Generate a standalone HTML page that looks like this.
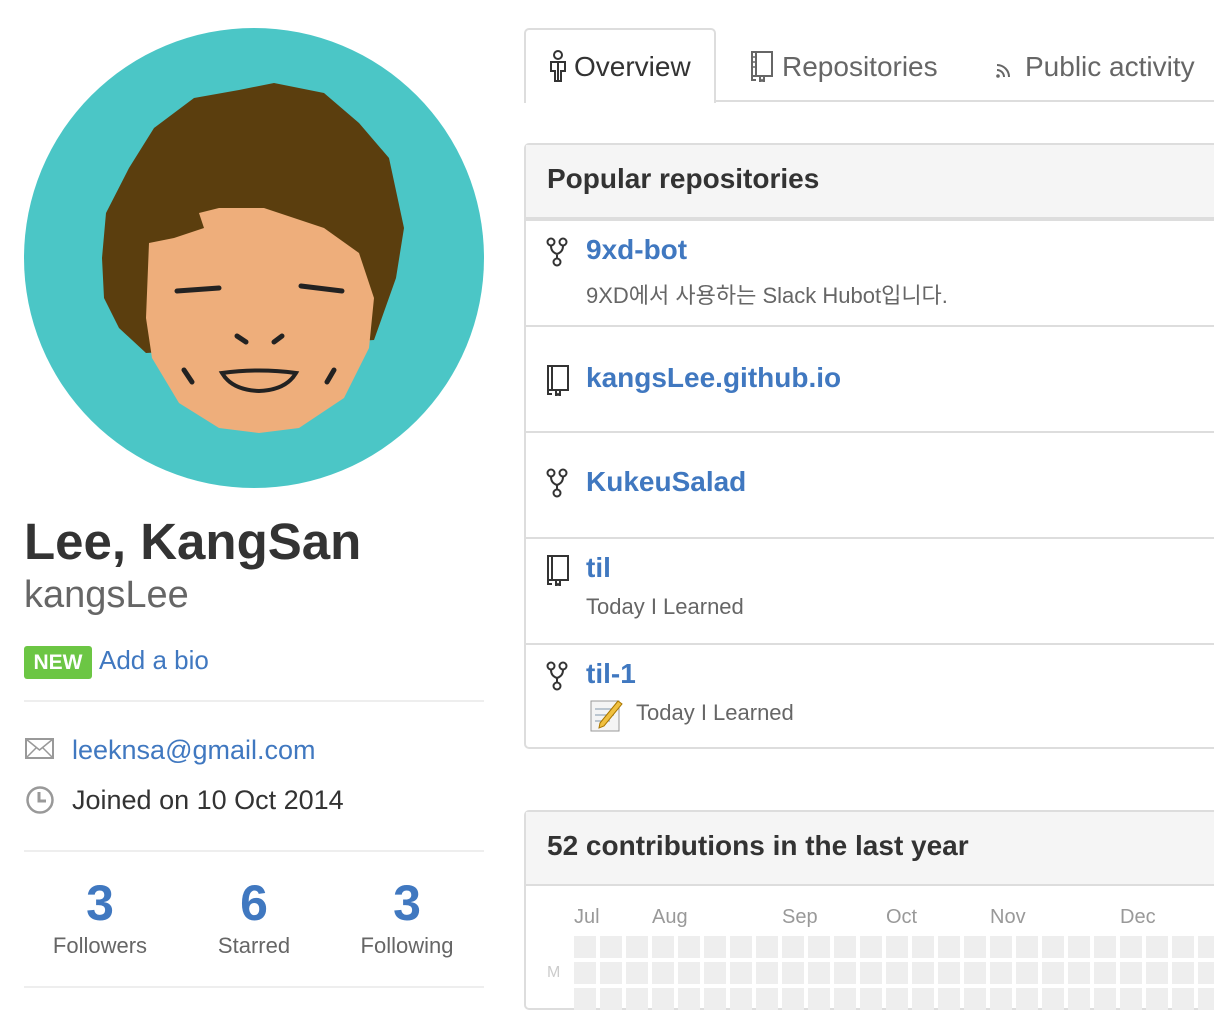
<!DOCTYPE html>
<html><head><meta charset="utf-8"><style>
*{margin:0;padding:0;box-sizing:border-box}
body{width:1214px;height:994px;overflow:hidden;background:#fff;font-family:"Liberation Sans","Noto Sans CJK KR",sans-serif;color:#333;position:relative}
.a{position:absolute;white-space:nowrap}
.hr{position:absolute;left:24px;width:460px;height:2px;background:#eee}
.blue{color:#4078c0}
.box{position:absolute;left:524px;width:720px;border:2px solid #ddd;border-radius:5px}
.hd{background:#f5f5f5;border-bottom:2px solid #ddd;font-weight:bold;font-size:28px;padding-left:21px;color:#333}
.row{position:relative;border-top:2px solid #ddd;height:106px}
.row:first-of-type{border-top:none}
.t{position:absolute;left:60px;font-weight:bold;font-size:28px;color:#4078c0}
.d{position:absolute;left:60px;font-size:22px;color:#666}
.ic{position:absolute;left:20px}
.cell{position:absolute;width:22px;height:22px;background:#eee}
</style></head><body>
<svg class="a" style="left:24px;top:28px" width="460" height="460" viewBox="0 0 460 460">
<circle cx="230" cy="230" r="230" fill="#4bc6c6"/>
<path d="M250 55 L215 62 L170 70 L130 100 L105 140 L82 185 L78 230 L80 270 L95 300 L122 325 L350 312 L372 250 L380 200 L365 130 L335 95 L300 65 Z" fill="#5b3e0e"/>
<path d="M175 185 L195 180 L240 180 L300 200 L335 225 L350 270 L345 320 L320 370 L275 400 L235 405 L195 400 L155 375 L128 330 L122 290 L125 215 L150 210 L180 200 Z" fill="#eeae7b"/>
<g stroke="#222" stroke-width="5" stroke-linecap="round" fill="none">
<path d="M153 263 L195 260"/><path d="M277 258 L318 263"/>
<path d="M213 308 L222 314"/><path d="M250 314 L258 308"/>
<path d="M160 342 L168 354"/><path d="M310 342 L303 354"/>
</g>
<path d="M198 345 Q235 340 272 345 Q262 362 235 363 Q208 362 198 345 Z" fill="#eeae7b" stroke="#222" stroke-width="4"/>
</svg>
<div class="a" style="left:24px;top:512px;font-size:51px;font-weight:bold;color:#333">Lee, KangSan</div>
<div class="a" style="left:24px;top:574px;font-size:38px;color:#666">kangsLee</div>
<div class="a" style="left:24px;top:646px;width:68px;height:33px;background:#6cc644;border-radius:3px;color:#fff;font-weight:bold;font-size:21px;line-height:33px;text-align:center">NEW</div>
<div class="a blue" style="left:99px;top:645px;font-size:26px">Add a bio</div>
<div class="hr" style="top:700px"></div>
<svg class="a" style="left:25px;top:738px" width="30" height="22" viewBox="0 0 30 22"><rect x="1" y="1" width="27" height="19" fill="none" stroke="#999" stroke-width="2"/><path d="M1 1 L14.5 12 L28 1 M1 20 L11 10 M28 20 L18 10" fill="none" stroke="#999" stroke-width="1.5"/></svg>
<div class="a blue" style="left:72px;top:735px;font-size:27px">leeknsa@gmail.com</div>
<svg class="a" style="left:25px;top:785px" width="30" height="30" viewBox="0 0 30 30"><circle cx="15" cy="15" r="12.5" fill="none" stroke="#999" stroke-width="2.5"/><path d="M14 7 V16 H21" fill="none" stroke="#999" stroke-width="3"/></svg>
<div class="a" style="left:72px;top:785px;font-size:27px;color:#333">Joined on 10 Oct 2014</div>
<div class="hr" style="top:850px"></div>
<div class="a" style="left:0;top:874px;width:200px;text-align:center;font-size:50px;font-weight:bold;color:#4078c0">3</div>
<div class="a" style="left:154px;top:874px;width:200px;text-align:center;font-size:50px;font-weight:bold;color:#4078c0">6</div>
<div class="a" style="left:307px;top:874px;width:200px;text-align:center;font-size:50px;font-weight:bold;color:#4078c0">3</div>
<div class="a" style="left:0;top:933px;width:200px;text-align:center;font-size:22px;color:#666">Followers</div>
<div class="a" style="left:154px;top:933px;width:200px;text-align:center;font-size:22px;color:#666">Starred</div>
<div class="a" style="left:307px;top:933px;width:200px;text-align:center;font-size:22px;color:#666">Following</div>
<div class="hr" style="top:986px"></div>

<div class="a" style="left:524px;top:100px;width:700px;height:2px;background:#ddd"></div>
<div class="a" style="left:524px;top:28px;width:192px;height:75px;border:2px solid #ddd;border-bottom:none;border-radius:5px 5px 0 0;background:#fff"></div>
<svg class="a" style="left:549px;top:50px" width="18" height="32" viewBox="0 0 18 32"><circle cx="9" cy="5" r="4" fill="none" stroke="#333" stroke-width="2"/><path d="M2 12 H16 V21 H12 V31 H6 V21 H2 Z M9 13 V30" fill="none" stroke="#333" stroke-width="2"/></svg>
<div class="a" style="left:574px;top:51px;font-size:28px;color:#333">Overview</div>
<svg class="a" style="left:750px;top:50px" width="24" height="32" viewBox="0 0 24 32"><path d="M2 2 H22 V26 H2 Z M6 2 V26 M2 26 V30 H6 M10 26 V32 L12 30 L14 32 V26" fill="none" stroke="#666" stroke-width="2"/><path d="M4 6 V8 M4 11 V13 M4 16 V18" stroke="#666" stroke-width="1.5"/></svg>
<div class="a" style="left:782px;top:51px;font-size:28px;color:#666">Repositories</div>
<svg class="a" style="left:995px;top:57px" width="22" height="22" viewBox="0 0 22 22"><path d="M2 8 A12 12 0 0 1 14 20 M2 13 A7 7 0 0 1 9 20" fill="none" stroke="#666" stroke-width="2"/><circle cx="3" cy="19" r="1.8" fill="#666"/></svg>
<div class="a" style="left:1025px;top:51px;font-size:28px;color:#666">Public activity</div>

<div class="box" style="top:143px;height:606px">
<div class="hd" style="height:74px;line-height:68px">Popular repositories</div>
<div class="row"><svg class="ic" style="top:16px" width="22" height="30" viewBox="0 0 22 30"><g fill="none" stroke="#333" stroke-width="2"><circle cx="5" cy="5" r="3.5"/><circle cx="17" cy="5" r="3.5"/><circle cx="11" cy="25" r="3.5"/><path d="M5 9 Q5 15 11 17 Q17 15 17 9 M11 17 V21"/></g></svg><div class="t" style="top:13px">9xd-bot</div><div class="d" style="top:57px">9XD에서 사용하는 Slack Hubot입니다.</div></div>
<div class="row"><svg class="ic" style="top:37px" width="24" height="32" viewBox="0 0 24 32"><path d="M2 2 H22 V26 H2 Z M6 2 V26 M2 26 V30 H6 M10 26 V32 L12 30 L14 32 V26" fill="none" stroke="#333" stroke-width="2"/></svg><div class="t" style="top:35px">kangsLee.github.io</div></div>
<div class="row"><svg class="ic" style="top:35px" width="22" height="30" viewBox="0 0 22 30"><g fill="none" stroke="#333" stroke-width="2"><circle cx="5" cy="5" r="3.5"/><circle cx="17" cy="5" r="3.5"/><circle cx="11" cy="25" r="3.5"/><path d="M5 9 Q5 15 11 17 Q17 15 17 9 M11 17 V21"/></g></svg><div class="t" style="top:33px">KukeuSalad</div></div>
<div class="row"><svg class="ic" style="top:15px" width="24" height="32" viewBox="0 0 24 32"><path d="M2 2 H22 V26 H2 Z M6 2 V26 M2 26 V30 H6 M10 26 V32 L12 30 L14 32 V26" fill="none" stroke="#333" stroke-width="2"/></svg><div class="t" style="top:13px">til</div><div class="d" style="top:55px">Today I Learned</div></div>
<div class="row" style="height:104px"><svg class="ic" style="top:16px" width="22" height="30" viewBox="0 0 22 30"><g fill="none" stroke="#333" stroke-width="2"><circle cx="5" cy="5" r="3.5"/><circle cx="17" cy="5" r="3.5"/><circle cx="11" cy="25" r="3.5"/><path d="M5 9 Q5 15 11 17 Q17 15 17 9 M11 17 V21"/></g></svg><div class="t" style="top:13px">til-1</div>
<svg class="a" style="left:64px;top:52px" width="34" height="36" viewBox="0 0 34 36"><rect x="1" y="4" width="28" height="30" fill="#f4f4f4" stroke="#999"/><path d="M5 12 H24 M5 18 H24 M5 24 H20" stroke="#9ab" stroke-width="1.2"/><path d="M10 26 L28 4 L32 7 L14 29 L9 31 Z" fill="#f0c040" stroke="#a70" stroke-width="1"/></svg>
<div class="d" style="top:55px;left:110px">Today I Learned</div></div>
</div>

<div class="box" style="top:810px;height:200px">
<div class="hd" style="height:74px;line-height:68px">52 contributions in the last year</div>
</div>
<div class="a" style="top:906px;left:574px;font-size:20px;color:#999">Jul</div>
<div class="a" style="top:906px;left:652px;font-size:20px;color:#999">Aug</div>
<div class="a" style="top:906px;left:782px;font-size:20px;color:#999">Sep</div>
<div class="a" style="top:906px;left:886px;font-size:20px;color:#999">Oct</div>
<div class="a" style="top:906px;left:990px;font-size:20px;color:#999">Nov</div>
<div class="a" style="top:906px;left:1120px;font-size:20px;color:#999">Dec</div>
<div class="a" style="top:964px;left:547px;font-size:16px;color:#ccc">M</div>
<div id="g"></div>
<script>
var h='';for(var c=0;c<25;c++)for(var r=0;r<3;r++)h+='<div class="cell" style="left:'+(574+c*26)+'px;top:'+(936+r*26)+'px"></div>';document.getElementById('g').innerHTML=h;
</script>
</body></html>
